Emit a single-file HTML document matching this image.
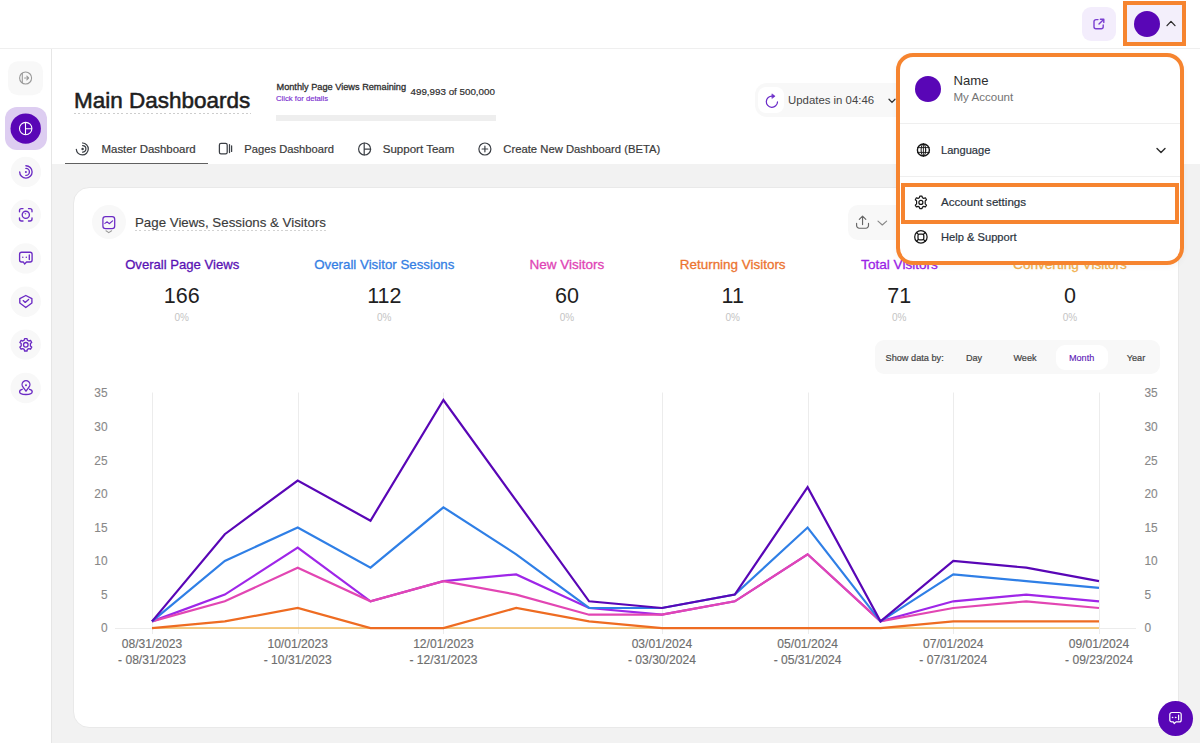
<!DOCTYPE html>
<html><head><meta charset="utf-8">
<style>
*{box-sizing:border-box;margin:0;padding:0}
html,body{width:1200px;height:743px;overflow:hidden;background:#fff;font-family:"Liberation Sans",sans-serif;color:#333}
.abs{position:absolute}
.nw{white-space:nowrap}
#hdr{position:absolute;left:0;top:0;width:1200px;height:49px;background:#fff;border-bottom:1px solid #efefef}
#side{position:absolute;left:0;top:49px;width:52px;height:694px;background:#fff;border-right:1px solid #e6e6e6}
#top{position:absolute;left:52px;top:49px;width:1148px;height:115px;background:#fff}
#gray{position:absolute;left:52px;top:164px;width:1148px;height:579px;background:#f2f2f2}
#card{position:absolute;left:73px;top:186.5px;width:1106px;height:541px;background:#fff;border-radius:16px;border:1px solid #e9e9e9}
.sb{position:absolute;left:11px;width:30px;height:30px;border-radius:50%;background:#f6f6f6}
.sb svg{position:absolute;left:8px;top:8px}
.tab{position:absolute;top:143px;font-size:11.5px;color:#3a3a3a;-webkit-text-stroke:0.2px #3a3a3a}
.lbl{position:absolute;top:256.5px;width:200px;text-align:center;font-size:13.3px;white-space:nowrap;-webkit-text-stroke:0.3px currentColor}
.num{position:absolute;top:284px;width:100px;text-align:center;font-size:21.5px;color:#1f1f1f}
.pct{position:absolute;top:312px;width:100px;text-align:center;font-size:10px;color:#c4c4c4}
</style></head><body>

<div id="hdr"></div>
<div id="side"></div>
<div id="top"></div>
<div id="gray"></div>
<div id="card"></div>

<!-- header right -->
<div class="abs" style="left:1082px;top:7px;width:34px;height:34px;border-radius:9px;background:#f3edfc"></div>
<svg class="abs" style="left:1092px;top:17px" width="14" height="14" viewBox="0 0 14 14" fill="none" stroke="#7a3fd0" stroke-width="1.4" stroke-linecap="round" stroke-linejoin="round">
 <path d="M6 2.6 H4 A2 2 0 0 0 2 4.6 V9.8 A2 2 0 0 0 4 11.8 H9.2 A2 2 0 0 0 11.2 9.8 V8"/>
 <path d="M7 7 L11.6 2.4 M8.4 2.2 H11.8 V5.6"/>
</svg>
<div class="abs" style="left:1123px;top:1px;width:63px;height:45px;border:4px solid #f6842f;background:#f3effb"></div>
<div class="abs" style="left:1134px;top:10.5px;width:26px;height:26px;border-radius:50%;background:#5906b6"></div>
<svg class="abs" style="left:1164.6px;top:18px" width="12" height="10" viewBox="0 0 12 10" fill="none" stroke="#2a2a2a" stroke-width="1.3" stroke-linecap="round" stroke-linejoin="round"><path d="M2 7.6 L6 3.4 L10 7.6"/></svg>

<!-- title area -->
<div class="abs nw" style="left:74px;top:88px;font-size:22.5px;font-weight:400;color:#1e1e1e;-webkit-text-stroke:0.55px #1e1e1e;line-height:26px">Main Dashboards</div>
<div class="abs" style="left:74px;top:113px;width:177px;height:1px;background:repeating-linear-gradient(90deg,#cdcdcd 0,#cdcdcd 2px,transparent 2px,transparent 4.3px)"></div>

<div class="abs nw" style="left:276.5px;top:82px;font-size:9.2px;font-weight:400;color:#2e2e2e;-webkit-text-stroke:0.3px #2e2e2e;line-height:11px">Monthly Page Views Remaining</div>
<div class="abs nw" style="left:276px;top:93.5px;font-size:7.7px;color:#7a2fd0;-webkit-text-stroke:0.15px #7a2fd0;line-height:10px">Click for details</div>
<div class="abs nw" style="left:410.5px;top:86px;font-size:9.8px;color:#2e2e2e;-webkit-text-stroke:0.2px #2e2e2e;line-height:11px">499,993 of 500,000</div>
<div class="abs" style="left:276px;top:115px;width:220px;height:6px;background:#eeeeee"></div>

<div class="abs" style="left:755px;top:83px;width:160px;height:34px;border-radius:12px;background:#f8f8f8"></div>
<div class="abs" style="left:758px;top:87px;width:26px;height:26px;border-radius:8px;background:#fff"></div>
<svg class="abs" style="left:764px;top:93px" width="16" height="16" viewBox="0 0 16 16" fill="none" stroke="#6a2bc8" stroke-width="1.25" stroke-linecap="round" stroke-linejoin="round">
 <path d="M8.3 3.1 A5.6 5.6 0 1 0 13.5 8.9"/>
 <path d="M8.2 1.1 L11.1 3.2 L8.2 5.3 Z" fill="#6a2bc8" stroke-width="0.6"/>
</svg>
<div class="abs nw" style="left:788px;top:93px;font-size:11.4px;color:#444;line-height:14px">Updates in 04:46</div>
<svg class="abs" style="left:887px;top:96px" width="10" height="10" viewBox="0 0 10 10" fill="none" stroke="#333" stroke-width="1.3" stroke-linecap="round"><path d="M2 3.2 L5 6.4 L8 3.2"/></svg>

<!-- tabs -->
<svg class="abs" style="left:74px;top:142px" width="16" height="14" viewBox="0 0 16 14" fill="none" stroke="#3b3f45" stroke-width="1.25" stroke-linecap="round">
 <path d="M8.6 1 A6 6 0 1 1 2.3 7.3"/>
 <path d="M8.6 3.6 A3.3 3.3 0 0 1 8.6 10.2"/>
 <circle cx="8.6" cy="6.9" r="0.6" fill="#3b3f45"/>
</svg>
<div class="tab nw" style="left:101.5px;font-size:11.45px">Master Dashboard</div>
<div class="abs" style="left:65px;top:162.5px;width:143px;height:1.5px;background:#606060"></div>
<svg class="abs" style="left:218px;top:142px" width="16" height="14" viewBox="0 0 16 14" fill="none" stroke="#3b3f45" stroke-width="1.25" stroke-linecap="round">
 <rect x="1.4" y="1.4" width="7.8" height="10.4" rx="1.6"/>
 <path d="M11.5 2.6 V10.6 M13.6 3.8 V9.4"/>
</svg>
<div class="tab nw" style="left:244.3px;font-size:11.2px">Pages Dashboard</div>
<svg class="abs" style="left:357px;top:142px" width="15" height="14" viewBox="0 0 15 14" fill="none" stroke="#3b3f45" stroke-width="1.2" stroke-linecap="round">
 <circle cx="7.6" cy="7" r="6"/>
 <path d="M7.2 1 V13 M7.2 7.2 H13.6"/>
</svg>
<div class="tab nw" style="left:382.7px;font-size:11.55px">Support Team</div>
<svg class="abs" style="left:477px;top:142px" width="15" height="14" viewBox="0 0 15 14" fill="none" stroke="#3b3f45" stroke-width="1.2" stroke-linecap="round">
 <circle cx="7.9" cy="7" r="6"/>
 <path d="M7.9 4.2 V9.8 M5.1 7 H10.7"/>
</svg>
<div class="tab nw" style="left:503.3px;font-size:11.28px">Create New Dashboard (BETA)</div>

<!-- card header -->
<div class="abs" style="left:91.5px;top:204.5px;width:34px;height:34px;border-radius:50%;background:#f8f8f8"></div>
<svg class="abs" style="left:101px;top:215px" width="16" height="20" viewBox="0 0 16 20" fill="none" stroke-linecap="round" stroke-linejoin="round">
 <rect x="1.9" y="1.7" width="11.8" height="11.8" rx="2.6" stroke="#6b2bc4" stroke-width="1.25"/>
 <path d="M3.9 8.4 L6.2 6.8 L8.2 8.7 L11.6 5.9" stroke="#6b2bc4" stroke-width="1.15"/>
 <path d="M5 15.8 L7.8 17.6 L10.6 15.8" stroke="#9a9a9a" stroke-width="1.1"/>
</svg>
<div class="abs nw" style="left:135px;top:215px;font-size:13.3px;color:#3a3a3a;-webkit-text-stroke:0.15px #3a3a3a;line-height:16px">Page Views, Sessions &amp; Visitors</div>
<div class="abs" style="left:135px;top:230px;width:191px;height:1px;background:repeating-linear-gradient(90deg,#d2d2d2 0,#d2d2d2 2px,transparent 2px,transparent 4.3px)"></div>

<div class="abs" style="left:848px;top:205.3px;width:60px;height:34.5px;border-radius:10px;background:#f8f8f8"></div>
<svg class="abs" style="left:854px;top:213px" width="18" height="18" viewBox="0 0 18 18" fill="none" stroke="#666" stroke-width="1.15" stroke-linecap="round" stroke-linejoin="round">
 <path d="M2.6 10.4 V12.6 A2.6 2.6 0 0 0 5.2 15.2 H11.9 A2.6 2.6 0 0 0 14.5 12.6 V10.4"/>
 <path d="M8.55 11.6 V3.4 M5.3 6.4 L8.55 3.2 L11.8 6.4"/>
</svg>
<svg class="abs" style="left:876px;top:219px" width="12" height="8" viewBox="0 0 12 8" fill="none" stroke="#888" stroke-width="1.15" stroke-linecap="round" stroke-linejoin="round"><path d="M2 2.1 L6.3 6 L10.6 2.1"/></svg>

<!-- stats -->
<div class="lbl" style="left:82.2px;color:#5a12b4;font-size:13.1px">Overall Page Views</div>
<div class="num" style="left:131.8px">166</div>
<div class="pct" style="left:131.8px">0%</div>
<div class="lbl" style="left:284.3px;color:#3580e4;font-size:13.3px">Overall Visitor Sessions</div>
<div class="num" style="left:334.3px">112</div>
<div class="pct" style="left:334.3px">0%</div>
<div class="lbl" style="left:466.9px;color:#e044b5;font-size:13.5px">New Visitors</div>
<div class="num" style="left:516.9px">60</div>
<div class="pct" style="left:516.9px">0%</div>
<div class="lbl" style="left:632.7px;color:#ec7430;font-size:13.45px">Returning Visitors</div>
<div class="num" style="left:682.7px">11</div>
<div class="pct" style="left:682.7px">0%</div>
<div class="lbl" style="left:799.5px;color:#9b22e6;font-size:13.6px">Total Visitors</div>
<div class="num" style="left:849.3px">71</div>
<div class="pct" style="left:849.3px">0%</div>
<div class="lbl" style="left:970px;color:#f2b04e;font-size:13.6px">Converting Visitors</div>
<div class="num" style="left:1020px">0</div>
<div class="pct" style="left:1020px">0%</div>

<!-- show data by -->
<div class="abs" style="left:875px;top:340px;width:285px;height:34px;border-radius:9px;background:#f8f8f8"></div>
<div class="abs" style="left:1055.5px;top:344.5px;width:52.5px;height:25.5px;border-radius:9px;background:#fff"></div>
<div class="abs nw" style="left:885.5px;top:351.7px;font-size:9.2px;color:#444;-webkit-text-stroke:0.2px #444;line-height:12px">Show data by:</div>
<div class="abs nw" style="left:944px;top:351.7px;width:60px;text-align:center;font-size:9.1px;color:#444;-webkit-text-stroke:0.2px #444;line-height:12px">Day</div>
<div class="abs nw" style="left:995px;top:351.7px;width:60px;text-align:center;font-size:9.1px;color:#444;-webkit-text-stroke:0.2px #444;line-height:12px">Week</div>
<div class="abs nw" style="left:1051.6px;top:351.7px;width:60px;text-align:center;font-size:9.1px;color:#5c18b6;-webkit-text-stroke:0.12px #5c18b6;line-height:12px">Month</div>
<div class="abs nw" style="left:1106px;top:351.7px;width:60px;text-align:center;font-size:9.1px;color:#444;-webkit-text-stroke:0.2px #444;line-height:12px">Year</div>

<!-- chart -->
<svg class="abs" style="left:0;top:0" width="1200" height="743" viewBox="0 0 1200 743">
 <g stroke="#ececec" stroke-width="1">
  <path d="M152.5 392.5 V634"/>
  <path d="M298.5 392.5 V634"/>
  <path d="M443.5 392.5 V634"/>
  <path d="M662.5 392.5 V634"/>
  <path d="M808.5 392.5 V634"/>
  <path d="M953.5 392.5 V634"/>
  <path d="M1099.5 392.5 V634"/>
  <path d="M115 628.5 H1136"/>
 </g>
 <path d="M152 628 H1099" stroke="#f3bc5c" stroke-width="1.7" fill="none"/>
 <polyline points="152.0,621.4 224.8,594.6 297.7,547.6 370.5,601.3 443.4,581.1 516.2,574.4 589.1,608.0 661.9,614.7 734.8,601.3 807.6,554.3 880.5,621.4 953.3,601.3 1026.2,594.6 1099.0,601.3" fill="none" stroke="#9f26e8" stroke-width="2.2" stroke-linejoin="miter" stroke-miterlimit="10"/>
 <polyline points="152.0,628.1 224.8,621.4 297.7,608.0 370.5,628.1 443.4,628.1 516.2,608.0 589.1,621.4 661.9,628.1 734.8,628.1 807.6,628.1 880.5,628.1 953.3,621.4 1026.2,621.4 1099.0,621.4" fill="none" stroke="#ee6c22" stroke-width="2.2" stroke-linejoin="miter" stroke-miterlimit="10"/>
 <polyline points="152.0,621.4 224.8,601.3 297.7,567.7 370.5,601.3 443.4,581.1 516.2,594.6 589.1,614.7 661.9,614.7 734.8,601.3 807.6,554.3 880.5,621.4 953.3,608.0 1026.2,601.3 1099.0,608.0" fill="none" stroke="#e246b3" stroke-width="2.2" stroke-linejoin="miter" stroke-miterlimit="10"/>
 <polyline points="152.0,621.4 224.8,561.0 297.7,527.5 370.5,567.7 443.4,507.3 516.2,554.3 589.1,608.0 661.9,608.0 734.8,594.6 807.6,527.5 880.5,621.4 953.3,574.4 1026.2,581.1 1099.0,587.8" fill="none" stroke="#2f7fe6" stroke-width="2.2" stroke-linejoin="miter" stroke-miterlimit="10"/>
 <polyline points="152.0,621.4 224.8,534.2 297.7,480.5 370.5,520.7 443.4,400.0 516.2,500.6 589.1,601.3 661.9,608.0 734.8,594.6 807.6,487.2 880.5,621.4 953.3,561.0 1026.2,567.7 1099.0,581.1" fill="none" stroke="#5906b6" stroke-width="2.2" stroke-linejoin="miter" stroke-miterlimit="10"/>
 <g font-family="Liberation Sans" font-size="11.9" fill="#888" stroke="#888" stroke-width="0.1">
  <text x="107.5" y="397.4" text-anchor="end">35</text>
  <text x="1144.5" y="397.4">35</text>
  <text x="107.5" y="431.0" text-anchor="end">30</text>
  <text x="1144.5" y="431.0">30</text>
  <text x="107.5" y="464.6" text-anchor="end">25</text>
  <text x="1144.5" y="464.6">25</text>
  <text x="107.5" y="498.1" text-anchor="end">20</text>
  <text x="1144.5" y="498.1">20</text>
  <text x="107.5" y="531.7" text-anchor="end">15</text>
  <text x="1144.5" y="531.7">15</text>
  <text x="107.5" y="565.2" text-anchor="end">10</text>
  <text x="1144.5" y="565.2">10</text>
  <text x="107.5" y="598.8" text-anchor="end">5</text>
  <text x="1144.5" y="598.8">5</text>
  <text x="107.5" y="632.3" text-anchor="end">0</text>
  <text x="1144.5" y="632.3">0</text>
 </g>
 <g font-family="Liberation Sans" font-size="12.1" fill="#6e6e6e" stroke="#6e6e6e" stroke-width="0.15" text-anchor="middle">
  <text x="152.0" y="648.3">08/31/2023</text>
  <text x="152.0" y="664.3">- 08/31/2023</text>
  <text x="297.7" y="648.3">10/01/2023</text>
  <text x="297.7" y="664.3">- 10/31/2023</text>
  <text x="443.4" y="648.3">12/01/2023</text>
  <text x="443.4" y="664.3">- 12/31/2023</text>
  <text x="661.9" y="648.3">03/01/2024</text>
  <text x="661.9" y="664.3">- 03/30/2024</text>
  <text x="807.6" y="648.3">05/01/2024</text>
  <text x="807.6" y="664.3">- 05/31/2024</text>
  <text x="953.3" y="648.3">07/01/2024</text>
  <text x="953.3" y="664.3">- 07/31/2024</text>
  <text x="1099.0" y="648.3">09/01/2024</text>
  <text x="1099.0" y="664.3">- 09/23/2024</text>
 </g>
</svg>

<!-- chat button -->
<div class="abs" style="left:1158px;top:701px;width:35px;height:35px;border-radius:50%;background:#5806b6"></div>
<svg class="abs" style="left:1168px;top:711px" width="15" height="15" viewBox="0 0 15 15" fill="none" stroke="#fff" stroke-width="1.2" stroke-linecap="round" stroke-linejoin="round">
 <path d="M3.8 1.5 H11.2 A2 2 0 0 1 13.2 3.5 V8.9 A2 2 0 0 1 11.2 10.9 H8 L6.2 12.6 L5.4 10.9 H3.8 A2 2 0 0 1 1.8 8.9 V3.5 A2 2 0 0 1 3.8 1.5 Z"/>
 <path d="M10.6 4 V8.7"/>
 <circle cx="4.4" cy="6.4" r="0.35" fill="#fff" stroke-width="0.9"/><circle cx="7.6" cy="6.4" r="0.35" fill="#fff" stroke-width="0.9"/>
</svg>

<!-- sidebar -->
<svg class="abs" style="left:0;top:0" width="52" height="743" viewBox="0 0 52 743">
 <rect x="8" y="61.3" width="35" height="34" rx="10" fill="#f8f8f8"/>
 <g fill="none" stroke="#9a9a9a" stroke-width="1.1" stroke-linecap="round" stroke-linejoin="round">
  <circle cx="25.6" cy="78" r="6"/>
  <path d="M22.3 73.2 V82.8"/>
  <path d="M24.6 78 H28.6 M26.8 76.2 L28.6 78 L26.8 79.8"/>
 </g>
 <rect x="5" y="107" width="42" height="43" rx="12" fill="#ddcdf1"/>
 <circle cx="25.7" cy="128.6" r="15.2" fill="#5906b6"/>
 <g fill="none" stroke="#fff" stroke-width="1.1">
  <circle cx="25.7" cy="128.6" r="6.2"/>
  <path d="M25.5 122.4 V134.8 M25.5 128.8 H31.9"/>
 </g>
 <g fill="#f8f8f8">
  <circle cx="25.9" cy="171.9" r="15.2"/>
  <circle cx="25.7" cy="214.8" r="15.2"/>
  <circle cx="25.7" cy="258.4" r="15.2"/>
  <circle cx="25.7" cy="301.7" r="15.2"/>
  <circle cx="25.7" cy="344.6" r="15.2"/>
  <circle cx="25.7" cy="388" r="15.2"/>
 </g>
 <g fill="none" stroke="#6b2bc4" stroke-width="1.35" stroke-linecap="round" stroke-linejoin="round">
  <!-- signal -->
  <path d="M25.9 165.7 A6.2 6.2 0 1 1 19.7 171.9"/>
  <path d="M25.9 168.4 A3.5 3.5 0 0 1 25.9 175.4"/>
  <!-- scan -->
  <path d="M19.5 211.8 V210.6 A2 2 0 0 1 21.5 208.6 H23"/>
  <path d="M28.5 208.6 H30 A2 2 0 0 1 32 210.6 V211.8"/>
  <path d="M32 217.8 V219 A2 2 0 0 1 30 221 H28.5"/>
  <path d="M23 221 H21.5 A2 2 0 0 1 19.5 219 V217.8"/>
  <circle cx="25.8" cy="214.8" r="3.6"/>
  <!-- chat -->
  <path d="M21.6 252.2 H30.1 A2 2 0 0 1 32.1 254.2 V260 A2 2 0 0 1 30.1 262 H26.5 L24.6 264 L23.4 262 H21.6 A2 2 0 0 1 19.6 260 V254.2 A2 2 0 0 1 21.6 252.2 Z"/>
  <path d="M29.3 255 V259.5"/>
  <!-- shield -->
  <path d="M25.8 295.5 L31.9 298.6 V303 L25.8 307.5 L19.8 303 V298.6 Z"/>
  <path d="M23.2 300.6 L25.2 302.4 L28.6 299.4"/>
  <!-- gear -->
  <circle cx="25.8" cy="344.8" r="2.3"/>
  <path d="M24.6 338.6 H27 L27.4 340.2 L28.9 341 L30.5 340.4 L31.7 342.5 L30.4 343.6 V346 L31.7 347.1 L30.5 349.2 L28.9 348.6 L27.4 349.4 L27 351 H24.6 L24.2 349.4 L22.7 348.6 L21.1 349.2 L19.9 347.1 L21.2 346 V343.6 L19.9 342.5 L21.1 340.4 L22.7 341 L24.2 340.2 Z"/>
  <!-- pin -->
  <path d="M26 391.2 L23.2 387.3 A3.9 3.9 0 1 1 28.8 387.3 Z"/>
  <path d="M22.2 389.3 C19.8 389.8 19.6 391 19.6 391.8 C19.6 393.4 22.4 394.5 25.9 394.5 C29.4 394.5 32.2 393.4 32.2 391.8 C32.2 391 32 389.8 29.6 389.3"/>
 </g>
 <g fill="#6b2bc4">
  <circle cx="25.9" cy="171.9" r="1"/>
  <path d="M25.8 214.8 L24.3 212.9 L26.4 213.6 Z"/>
  <circle cx="22.8" cy="257.2" r="0.75"/>
  <circle cx="26.3" cy="257.2" r="0.75"/>
  <circle cx="26" cy="385.2" r="1"/>
 </g>
</svg>

<!-- dropdown panel -->
<div class="abs" style="left:896px;top:53px;width:288px;height:212px;border:4px solid #f6842f;border-radius:17px;background:#fff;box-shadow:0 2px 6px rgba(0,0,0,0.04)"></div>
<div class="abs" style="left:914.6px;top:75.6px;width:26px;height:26px;border-radius:50%;background:#5906b6"></div>
<div class="abs nw" style="left:953.5px;top:72.6px;font-size:13.1px;color:#2d2d2d;line-height:16px">Name</div>
<div class="abs nw" style="left:953.5px;top:91px;font-size:11.55px;color:#737373;line-height:13px">My Account</div>
<div class="abs" style="left:900px;top:123px;width:280px;height:1px;background:#efefef"></div>
<svg class="abs" style="left:915px;top:142px" width="17" height="17" viewBox="0 0 17 17" fill="none" stroke="#151515" stroke-linecap="round">
 <circle cx="8.4" cy="8" r="6" stroke-width="1.4"/>
 <ellipse cx="8.4" cy="8" rx="2.3" ry="6" stroke-width="1"/>
 <path d="M2.6 5.6 H14.2 M2.6 10.4 H14.2 M8.4 2 V14" stroke-width="0.9"/>
</svg>
<div class="abs nw" style="left:941px;top:143px;font-size:11.1px;color:#2b333d;-webkit-text-stroke:0.2px #2b333d;line-height:14px">Language</div>
<svg class="abs" style="left:1154.6px;top:144.6px" width="12" height="12" viewBox="0 0 12 12" fill="none" stroke="#2b2b2b" stroke-width="1.4" stroke-linecap="round" stroke-linejoin="round"><path d="M2 3.6 L6 7.6 L10 3.6"/></svg>
<div class="abs" style="left:900px;top:176px;width:280px;height:1px;background:#efefef"></div>
<div class="abs" style="left:901px;top:183px;width:278px;height:41px;border:4px solid #f6842f"></div>
<svg class="abs" style="left:913px;top:194px" width="17" height="17" viewBox="0 0 17 17" fill="none" stroke="#151515" stroke-width="1.2" stroke-linecap="round" stroke-linejoin="round">
 <circle cx="7.9" cy="8.4" r="2"/>
 <path d="M6.8 2.1 H9 L9.4 3.7 L10.8 4.4 L12.4 3.8 L13.5 5.7 L12.2 6.9 V9.9 L13.5 11.1 L12.4 13 L10.8 12.4 L9.4 13.1 L9 14.7 H6.8 L6.4 13.1 L5 12.4 L3.4 13 L2.3 11.1 L3.6 9.9 V6.9 L2.3 5.7 L3.4 3.8 L5 4.4 L6.4 3.7 Z"/>
</svg>
<div class="abs nw" style="left:941px;top:195px;font-size:11.6px;color:#2b333d;-webkit-text-stroke:0.2px #2b333d;line-height:14px">Account settings</div>
<svg class="abs" style="left:913px;top:229px" width="17" height="17" viewBox="0 0 17 17" fill="none" stroke="#151515" stroke-width="1.25" stroke-linecap="round" stroke-linejoin="round">
 <circle cx="7.9" cy="7.9" r="6.2"/>
 <rect x="5" y="5" width="5.8" height="5.8" rx="1.6"/>
 <path d="M3.5 3.5 L5.4 5.4 M12.3 3.5 L10.4 5.4 M3.5 12.3 L5.4 10.4 M12.3 12.3 L10.4 10.4"/>
</svg>
<div class="abs nw" style="left:941px;top:230px;font-size:11.15px;color:#2b333d;-webkit-text-stroke:0.2px #2b333d;line-height:14px">Help &amp; Support</div>

</body></html>
